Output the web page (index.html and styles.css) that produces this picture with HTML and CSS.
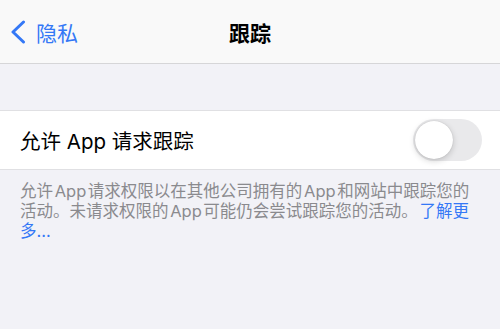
FILE: index.html
```html
<!DOCTYPE html>
<html lang="zh-CN">
<head>
    <meta charset="UTF-8">
    <meta name="viewport" content="width=device-width, initial-scale=1.0">
    <title>跟踪</title>
    <link rel="stylesheet" href="styles.css">
</head>
<body>
<header class="nav">
    <a class="back" href="#">
        <svg class="chevron" width="16" height="24" viewBox="0 0 16 24">
            <path d="M13.5 2 L3 12 L13.5 22" fill="none" stroke="currentColor" stroke-width="3" stroke-linecap="round" stroke-linejoin="round"/>
        </svg>
        <span>隐私</span>
    </a>
    <h1 class="title">跟踪</h1>
    <div></div>
</header>

<div class="group">
    <div class="cell">
        <span class="label">允许 App 请求跟踪</span>
        <div class="toggle"><div class="knob"></div></div>
    </div>
</div>

<p class="footer">允许 App 请求权限以在其他公司拥有的 App 和网站中跟踪您的<br>活动。未请求权限的 App 可能仍会尝试跟踪您的活动。 <a href="#">了解更多...</a></p>
</body>
</html>
```

FILE: styles.css
```css
* {
    box-sizing: border-box;
    margin: 0;
    padding: 0;
}

body {
    font-family: Inter, "Noto Sans CJK SC", sans-serif;
    background: #f2f2f7;
    color: #000;
    width: 500px;
    height: 329px;
    overflow: hidden;
}

.nav {
    height: 64px;
    background: #f9f9f9;
    border-bottom: 1px solid #d6d6d8;
    display: grid;
    grid-template-columns: 1fr auto 1fr;
    align-items: center;
}

.back {
    display: flex;
    align-items: center;
    gap: 10px;
    padding-left: 10px;
    color: #3478f6;
    text-decoration: none;
    font-size: 21px;
}

.chevron {
    display: block;
}

.title {
    font-size: 21px;
    font-weight: 700;
}

.group {
    margin-top: 46px;
    background: #fff;
    border-top: 1px solid #e0e0e3;
    border-bottom: 1px solid #e0e0e3;
}

.cell {
    height: 58px;
    padding: 0 18px 0 20px;
    display: flex;
    align-items: center;
    justify-content: space-between;
}

.label {
    font-size: 20.5px;
}

.toggle {
    width: 69px;
    height: 42px;
    border-radius: 21px;
    background: #e9e9eb;
    padding: 2px;
}

.knob {
    width: 38px;
    height: 38px;
    border-radius: 50%;
    background: #fff;
    box-shadow: 0 2px 6px rgba(0,0,0,0.18), 0 0 1px rgba(0,0,0,0.2);
}

.footer {
    padding: 11px 24px 0 20px;
    font-size: 16.5px;
    line-height: 20px;
    word-spacing: -3px;
    color: #8a8a8e;
}

.footer a {
    color: #3478f6;
    text-decoration: none;
}
```
